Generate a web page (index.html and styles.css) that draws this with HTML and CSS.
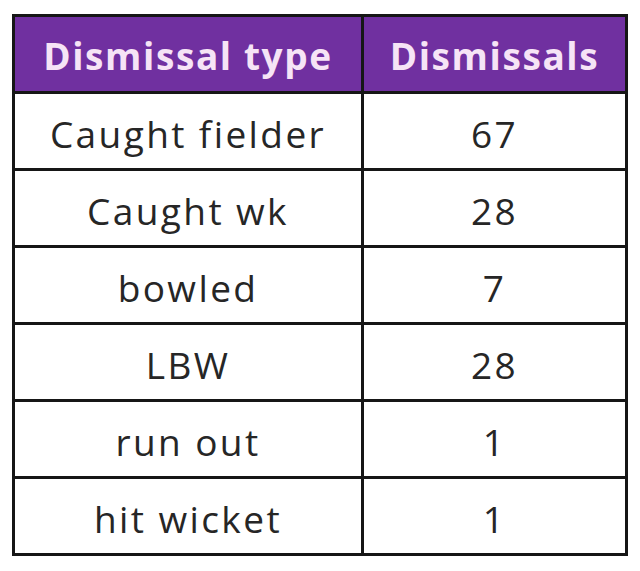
FILE: index.html
```html
<!DOCTYPE html>
<html>
<head>
<meta charset="utf-8">
<link rel="stylesheet" href="styles.css">
</head>
<body>
<table class="stats">
  <thead>
    <tr><th class="c1">Dismissal type</th><th class="c2">Dismissals</th></tr>
  </thead>
  <tbody>
    <tr><td>Caught fielder</td><td>67</td></tr>
    <tr><td>Caught wk</td><td>28</td></tr>
    <tr><td>bowled</td><td>7</td></tr>
    <tr><td>LBW</td><td>28</td></tr>
    <tr><td>run out</td><td>1</td></tr>
    <tr><td>hit wicket</td><td>1</td></tr>
  </tbody>
</table>
</body>
</html>
```
FILE: styles.css
```css
html, body {
  margin: 0;
  padding: 0;
  background: #ffffff;
}
body {
  padding: 14px 0 0 12px;
}
.stats {
  border-collapse: collapse;
  width: 616px;
  table-layout: fixed;
  font-family: "Open Sans", Lato, sans-serif;
}
.stats th,
.stats td {
  border: 3px solid #161616;
  padding: 0;
  text-align: center;
  vertical-align: middle;
  line-height: 1;
}
.stats .c1 { width: 346px; }
.stats th {
  height: 72px;
  background: #7030a0;
  color: #f6e4f6;
  font-weight: 700;
  font-size: 37px;
  letter-spacing: 1.6px;
  padding-top: 2px;
}
.stats td {
  height: 70px;
  color: #262626;
  font-size: 37px;
  font-weight: 400;
  letter-spacing: 2.4px;
  padding-top: 4px;
}
```
